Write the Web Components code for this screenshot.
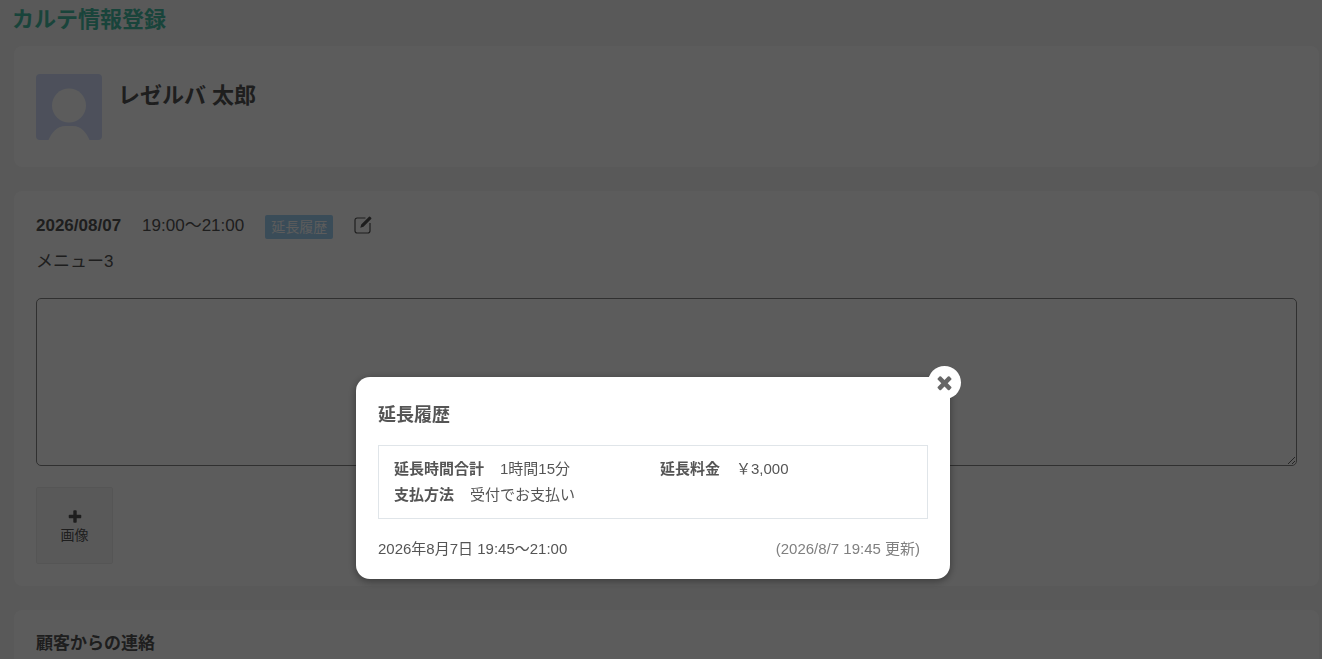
<!DOCTYPE html>
<html lang="ja">
<head>
<meta charset="utf-8">
<meta name="viewport" content="width=device-width, initial-scale=1">
<title>カルテ情報登録</title>
<style>
html { height: 100%; overflow: hidden; }
body { margin: 0; background: #f5f5f5; color: #555; font-family: "Liberation Sans", "Noto Sans CJK JP", sans-serif; font-size: 17px; line-height: 24px; }
</style>
</head>
<body>
<karte-page></karte-page>
<script>
const define = (name, html) => {
  const template = document.createElement('template');
  template.innerHTML = html;
  customElements.define(name, class extends HTMLElement {
    constructor() {
      super();
      this.attachShadow({ mode: 'open' }).append(template.content.cloneNode(true));
    }
  });
};

define('content-card', `
<style>
:host { display: block; background: #fff; border-radius: 8px; padding: 22px; }
</style>
<slot></slot>`);

define('customer-header', `
<style>
:host { display: flex; gap: 16px; align-items: flex-start; padding: 6px 0 5px; }
svg { width: 66px; height: 66px; display: block; }
h2 { margin: 8px 0 0; font-size: 22px; line-height: 28px; font-weight: bold; }
</style>
<svg viewBox="0 0 66 66" aria-hidden="true">
  <rect width="66" height="66" rx="4" fill="#d4defc"/>
  <circle cx="33" cy="31.500" r="17" fill="#fff"/>
  <path d="M12.500 66C15 60 20 52 30 52h6.500C46 52 51 60 53.500 66z" fill="#fff"/>
</svg>
<h2><slot></slot></h2>`);

define('history-badge', `
<style>
:host { display: block; }
button { display: block; border: 0; border-radius: 2px; padding: 0 6px; margin: 0; height: 24px; background: #a0d2f4; color: #fff; font: 14px/24px "Liberation Sans", "Noto Sans CJK JP", sans-serif; }
</style>
<button type="button"><slot></slot></button>`);

define('edit-button', `
<style>
:host { display: block; }
button { display: block; border: 0; padding: 1px 0; background: none; color: inherit; }
svg { display: block; width: 18px; height: 18px; }
</style>
<button type="button" aria-label="編集">
<svg viewBox="0 0 18 18" fill="none" stroke="currentColor">
  <path d="M11.500 2H3.200Q1 2 1 4.200v10.600Q1 17 3.200 17h10.600q2.200 0 2.200-2.200V7" stroke-width="1.200"/>
  <path d="M6.300 11.700l.9-3.200L15 .8q.5-.5 1.100 0l1.100 1q.5.600 0 1.200L9.500 10.800z" fill="currentColor" stroke="none"/>
</svg>
</button>`);

define('image-button', `
<style>
:host { display: block; }
button { display: flex; flex-direction: column; align-items: center; justify-content: center; width: 77px; height: 77px; padding: 2px 0 0; background: #f7f7f7; border: 1px solid #ececec; border-radius: 2px; color: inherit; font: 14px/20px "Liberation Sans", "Noto Sans CJK JP", sans-serif; }
svg { display: block; width: 16px; height: 16px; }
</style>
<button type="button">
<svg viewBox="0 0 1792 1792" fill="currentColor" aria-hidden="true"><path d="M1600 736v192q0 40-28 68t-68 28h-416v416q0 40-28 68t-68 28h-192q-40 0-68-28t-28-68v-416h-416q-40 0-68-28t-28-68v-192q0-40 28-68t68-28h416v-416q0-40 28-68t68-28h192q40 0 68 28t28 68v416h416q40 0 68 28t28 68z"/></svg>
<span><slot></slot></span>
</button>`);

define('visit-record', `
<style>
:host { display: block; }
.row { display: flex; align-items: flex-start; gap: 21px; padding-top: 2px; }
strong, .time { line-height: 22px; }
p { margin: 11px 0 24px; }
textarea { display: block; box-sizing: border-box; width: 100%; height: 168px; margin: 0 0 21px; padding: 8px; border: 1px solid #858585; border-radius: 5px; background: #fff; color: inherit; font: inherit; resize: vertical; }
</style>
<div class="row">
  <strong>2026/08/07</strong><span class="time">19:00〜21:00</span>
  <history-badge>延長履歴</history-badge>
  <edit-button></edit-button>
</div>
<p>メニュー3</p>
<textarea aria-label="カルテ"></textarea>
<image-button>画像</image-button>`);

define('history-dialog', `
<style>
:host { position: fixed; inset: 0; box-sizing: border-box; padding: 377px 16px 0 0; background: rgba(0,0,0,.64); display: flex; justify-content: center; align-items: flex-start; }
section { position: relative; box-sizing: border-box; width: 594px; max-width: 92%; padding: 26px 22px 17px 22px; background: #fff; border-radius: 14px; box-shadow: 0 2px 8px rgba(0,0,0,.4); font-size: 15px; line-height: 26px; }
h2 { margin: 0 0 18px; font-size: 18px; line-height: 24px; }
dl { display: grid; grid-template-columns: 1fr 1fr; column-gap: 14px; margin: 0; padding: 10px 15px; border: 1px solid #e0e5e9; }
dl div { display: flex; gap: 16px; }
dt { font-weight: bold; }
dd { margin: 0; }
.entry { display: flex; justify-content: space-between; margin-top: 17px; padding-right: 8px; }
.updated { color: #808080; }
button { position: absolute; top: -11px; right: -11px; width: 33px; height: 33px; padding: 0; border: 0; border-radius: 50%; background: #fff; color: #666; display: grid; place-items: center; }
svg { display: block; width: 21px; height: 21px; }
</style>
<section role="dialog" aria-labelledby="title">
  <h2 id="title">延長履歴</h2>
  <dl>
    <div><dt>延長時間合計</dt><dd>1時間15分</dd></div>
    <div><dt>延長料金</dt><dd>￥3,000</dd></div>
    <div><dt>支払方法</dt><dd>受付でお支払い</dd></div>
  </dl>
  <div class="entry"><span>2026年8月7日 19:45〜21:00</span><span class="updated">(2026/8/7 19:45 更新)</span></div>
  <button type="button" aria-label="閉じる"><svg viewBox="0 0 1792 1792" fill="currentColor"><path d="M1490 1322q0 40-28 68l-136 136q-28 28-68 28t-68-28l-294-294-294 294q-28 28-68 28t-68-28l-136-136q-28-28-28-68t28-68l294-294-294-294q-28-28-28-68t28-68l136-136q28-28 68-28t68 28l294 294 294-294q28-28 68-28t68 28l136 136q28 28 28 68t-28 68l-294 294 294 294q28 28 28 68z"/></svg></button>
</section>`);

define('karte-page', `
<style>
:host { display: block; padding: 4px 3px 0 12px; }
h1 { margin: 0 0 10px; font-size: 22px; line-height: 32px; color: #45bda3; }
main { display: grid; gap: 24px; margin-left: 2px; }
h3 { margin: 0; font-size: 17px; line-height: 24px; }
</style>
<h1>カルテ情報登録</h1>
<main>
  <content-card><customer-header>レゼルバ 太郎</customer-header></content-card>
  <content-card><visit-record></visit-record></content-card>
  <content-card><h3>顧客からの連絡</h3></content-card>
</main>
<history-dialog></history-dialog>`);
</script>
</body>
</html>
